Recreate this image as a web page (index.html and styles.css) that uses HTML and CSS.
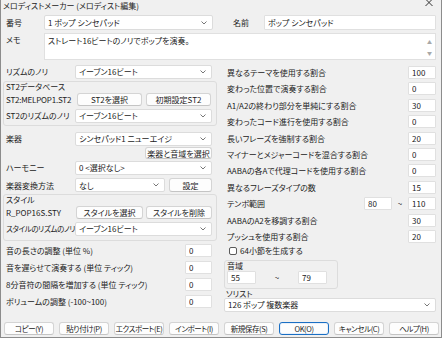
FILE: index.html
```html
<!DOCTYPE html>
<html lang="ja">
<head>
    <meta charset="UTF-8">
    <title>メロディストメーカー (メロディスト編集)</title>
    <link rel="stylesheet" href="styles.css">
</head>
<body>

<div class="dialog">
    <div class="titlebar">
        <span class="title">メロディストメーカー (メロディスト編集)</span>
        <svg class="close" width="10" height="8" viewBox="0 0 10 8"><path d="M1.5 0L8.5 7M8.5 0L1.5 7" stroke="#333" stroke-width="1" fill="none"/></svg>
    </div>

    <div class="head">
        <span class="head-lbl">番号</span>
        <div class="combo num"><span>1 ポップ シンセパッド</span><svg class="chev" width="6" height="4" viewBox="0 0 6 4"><path d="M0.5 0.5L3 3L5.5 0.5" stroke="#777" fill="none"/></svg></div>
        <span class="name-lbl">名前</span>
        <input class="field name" type="text" value="ポップ シンセパッド">
    </div>

    <div class="memo">
        <span class="head-lbl memo-lbl">メモ</span>
        <div class="memo-box">
            <span>ストレート16ビートのノリでポップを演奏。</span>
            <div class="scroll"><span>▲</span><span>▼</span></div>
        </div>
    </div>

    <div class="cols">
        <div class="left">
            <div class="lrow">
                <span class="lbl">リズムのノリ</span>
                <div class="combo wide"><span>イーブン16ビート</span><svg class="chev" width="6" height="4" viewBox="0 0 6 4"><path d="M0.5 0.5L3 3L5.5 0.5" stroke="#777" fill="none"/></svg></div>
            </div>

            <div class="group st2">
                <div class="group-title">ST2データベース</div>
                <div class="lrow btnrow">
                    <span class="lbl st2-lbl">ST2:MELPOP1.ST2</span>
                    <button class="btn st2-btn">ST2を選択</button>
                    <button class="btn st2-btn">初期設定ST2</button>
                </div>
                <div class="lrow">
                    <span class="lbl">ST2のリズムのノリ</span>
                    <div class="combo wide"><span>イーブン16ビート</span><svg class="chev" width="6" height="4" viewBox="0 0 6 4"><path d="M0.5 0.5L3 3L5.5 0.5" stroke="#777" fill="none"/></svg></div>
                </div>
            </div>

            <div class="lrow inst">
                <span class="lbl">楽器</span>
                <div class="combo wide"><span>シンセパッド1 ニューエイジ</span><svg class="chev" width="6" height="4" viewBox="0 0 6 4"><path d="M0.5 0.5L3 3L5.5 0.5" stroke="#777" fill="none"/></svg></div>
            </div>
            <div class="lrow small end">
                <button class="btn range-btn">楽器と音域を選択</button>
            </div>
            <div class="lrow">
                <span class="lbl">ハーモニー</span>
                <div class="combo wide"><span>0 &lt;選択なし&gt;</span><svg class="chev" width="6" height="4" viewBox="0 0 6 4"><path d="M0.5 0.5L3 3L5.5 0.5" stroke="#777" fill="none"/></svg></div>
            </div>
            <div class="lrow conv">
                <span class="lbl">楽器変換方法</span>
                <div class="combo short"><span>なし</span><svg class="chev" width="6" height="4" viewBox="0 0 6 4"><path d="M0.5 0.5L3 3L5.5 0.5" stroke="#777" fill="none"/></svg></div>
                <button class="btn set-btn">設定</button>
            </div>

            <div class="group style">
                <div class="group-title">スタイル</div>
                <div class="lrow btnrow">
                    <span class="lbl sty-lbl">R_POP16S.STY</span>
                    <button class="btn sty-btn">スタイルを選択</button>
                    <button class="btn sty-btn">スタイルを削除</button>
                </div>
                <div class="lrow">
                    <span class="lbl tight">スタイルのリズムのノリ</span>
                    <div class="combo wide"><span>イーブン16ビート</span><svg class="chev" width="6" height="4" viewBox="0 0 6 4"><path d="M0.5 0.5L3 3L5.5 0.5" stroke="#777" fill="none"/></svg></div>
                </div>
            </div>

            <div class="adjust">
                <div class="lrow"><span class="alb">音の長さの調整 (単位 %)</span><input class="field num-in" type="text" value="0"></div>
                <div class="lrow"><span class="alb">音を遅らせて演奏する (単位 ティック)</span><input class="field num-in" type="text" value="0"></div>
                <div class="lrow"><span class="alb">8分音符の間隔を増加する (単位 ティック)</span><input class="field num-in" type="text" value="0"></div>
                <div class="lrow"><span class="alb">ボリュームの調整 (-100~100)</span><input class="field num-in" type="text" value="0"></div>
            </div>
        </div>

        <div class="right">
            <div class="rrow first"><span class="rlb">異なるテーマを使用する割合</span><input class="field val" type="text" value="100"></div>
            <div class="rrow"><span class="rlb">変わった位置で演奏する割合</span><input class="field val" type="text" value="0"></div>
            <div class="rrow"><span class="rlb">A1/A2の終わり部分を単純にする割合</span><input class="field val" type="text" value="30"></div>
            <div class="rrow"><span class="rlb">変わったコード進行を使用する割合</span><input class="field val" type="text" value="0"></div>
            <div class="rrow"><span class="rlb">長いフレーズを強制する割合</span><input class="field val" type="text" value="20"></div>
            <div class="rrow"><span class="rlb">マイナーとメジャーコードを混合する割合</span><input class="field val" type="text" value="0"></div>
            <div class="rrow"><span class="rlb">AABAの各Aで代理コードを使用する割合</span><input class="field val" type="text" value="0"></div>
            <div class="rrow"><span class="rlb">異なるフレーズタイプの数</span><input class="field val" type="text" value="15"></div>
            <div class="rrow"><span class="rlb">テンポ範囲</span><input class="field val" type="text" value="80"><span class="tilde">~</span><input class="field val" type="text" value="110"></div>
            <div class="rrow"><span class="rlb">AABAのA2を移調する割合</span><input class="field val" type="text" value="30"></div>
            <div class="rrow"><span class="rlb">プッシュを使用する割合</span><input class="field val" type="text" value="20"></div>
            <div class="check-row"><span class="checkbox"></span><span>64小節を生成する</span></div>

            <div class="range">
                <div class="range-title">音域</div>
                <div class="range-row">
                    <input class="field rng" type="text" value="55">
                    <span class="rng-tilde">~</span>
                    <input class="field rng" type="text" value="79">
                </div>
            </div>
            <div class="solo-title">ソリスト</div>
            <div class="combo solo"><span>126 ポップ 複数楽器</span><svg class="chev" width="6" height="4" viewBox="0 0 6 4"><path d="M0.5 0.5L3 3L5.5 0.5" stroke="#777" fill="none"/></svg></div>
        </div>
    </div>

    <div class="footer">
        <button class="btn foot-btn">コピー(Y)</button>
        <button class="btn foot-btn">貼り付け(P)</button>
        <button class="btn foot-btn">エクスポート(E)</button>
        <button class="btn foot-btn">インポート(I)</button>
        <button class="btn foot-btn">新規保存(S)</button>
        <button class="btn foot-btn ok">OK(O)</button>
        <button class="btn foot-btn">キャンセル(C)</button>
        <button class="btn foot-btn">ヘルプ(H)</button>
    </div>
</div>

</body>
</html>
```

FILE: styles.css
```css
body {
    margin: 0;
    font-family: "Noto Sans CJK JP", "Noto Sans", sans-serif;
    font-size: 8px;
    font-feature-settings: "palt";
    color: #222;
    background: #f0f0f0;
}
.dialog {
    width: 442px;
    height: 338px;
    box-sizing: border-box;
    background: #f0f0f0;
    border: 1px solid #8c8c8c;
    border-top: none;
    display: flex;
    flex-direction: column;
}
.titlebar {
    height: 15px;
    display: flex;
    justify-content: space-between;
    align-items: flex-start;
    padding: 0 7px 0 2px;
}
.title {
    line-height: 12px;
}
.close {
    margin-top: -1px;
}

/* shared controls */
.combo {
    box-sizing: border-box;
    height: 14px;
    flex-shrink: 0;
    background: #fff;
    border: 1px solid #dcdcdc;
    border-radius: 2px;
    display: flex;
    align-items: center;
    justify-content: space-between;
    padding: 0 5px 0 3px;
    white-space: nowrap;
}
.field {
    box-sizing: border-box;
    height: 13px;
    flex-shrink: 0;
    margin: 0;
    padding: 0 3px;
    background: #fff;
    border: 1px solid #e0e0e0;
    border-radius: 1px;
    font: inherit;
    font-feature-settings: "palt";
    color: #222;
    outline: none;
}
.btn {
    box-sizing: border-box;
    height: 13px;
    flex-shrink: 0;
    margin: 0;
    padding: 0;
    background: #fdfdfd;
    border: 1px solid #d4d4d4;
    border-bottom-color: #c4c4c4;
    border-radius: 3px;
    font: inherit;
    font-feature-settings: "palt";
    color: #222;
    white-space: nowrap;
    overflow: hidden;
}

/* header */
.head {
    height: 15px;
    display: flex;
    align-items: center;
}
.head-lbl {
    width: 43px;
    box-sizing: border-box;
    padding-left: 5px;
    flex-shrink: 0;
}
.combo.num {
    width: 169px;
    height: 15px;
}
.name-lbl {
    width: 31px;
    margin-left: 20px;
}
.field.name {
    width: 172px;
    height: 15px;
}
.memo {
    margin-top: 3px;
    height: 27px;
    display: flex;
}
.memo-lbl {
    padding-top: 1px;
}
.memo-box {
    width: 392px;
    box-sizing: border-box;
    background: #fff;
    border: 1px solid #e0e0e0;
    padding: 1px 3px;
    display: flex;
    justify-content: space-between;
}
.scroll {
    display: flex;
    flex-direction: column;
    justify-content: space-between;
    padding: 3px 0 2px;
    font-size: 5px;
    color: #a8a8a8;
}

/* columns */
.cols {
    margin-top: 3px;
    height: 257px;
    display: flex;
}
.left {
    width: 214px;
    margin-left: 2px;
}
.right {
    width: 213px;
    margin-left: 7px;
}
.lrow {
    height: 17px;
    display: flex;
    align-items: center;
}
.lbl {
    width: 72px;
    flex-shrink: 0;
    box-sizing: border-box;
    padding-left: 3px;
    white-space: nowrap;
}
.lbl.tight {
    font-size: 7.5px;
    letter-spacing: -0.4px;
}
.combo.wide {
    width: 137px;
}
.group {
    border: 1px solid #dcdcdc;
    border-radius: 3px;
}
.group .lbl {
    width: 71px;
    padding-left: 2px;
}
.group-title {
    height: 10px;
    line-height: 10px;
    padding-left: 2px;
}
.st2 {
    margin-top: 1px;
    padding-bottom: 1px;
}
.lrow.btnrow {
    height: 15px;
}
.group .st2-lbl {
    width: 73px;
    letter-spacing: -0.2px;
}
.st2-btn {
    width: 65px;
    margin-right: 4px;
}
.lrow.inst {
    margin-top: 4px;
}
.lrow.small {
    height: 12px;
}
.lrow.end {
    justify-content: flex-end;
    padding-right: 5px;
}
.range-btn {
    width: 67px;
    height: 12px;
}
.lrow.conv {
    height: 18px;
}
.combo.short {
    width: 90px;
}
.set-btn {
    width: 43px;
    height: 14px;
    margin-left: 4px;
}
.style {
    padding-bottom: 3px;
}
.group .sty-lbl {
    width: 72px;
}
.sty-btn {
    width: 67px;
    margin-right: 3px;
}
.sty-btn + .sty-btn {
    width: 66px;
}
.adjust {
    margin-top: 1px;
}
.alb {
    flex: 1;
    padding-left: 3px;
    white-space: nowrap;
}
.num-in {
    width: 27px;
    margin-right: 5px;
}

/* right column */
.rrow {
    height: 16.4px;
    display: flex;
    align-items: center;
    padding: 0 1px 0 3px;
}
.rrow.first {
    margin-top: 1.3px;
}
.rlb {
    flex: 1;
    white-space: nowrap;
}
.val {
    width: 28px;
}
.tilde {
    width: 16px;
    text-align: center;
}
.check-row {
    height: 12px;
    display: flex;
    align-items: center;
    padding-left: 5px;
}
.checkbox {
    width: 8px;
    height: 8px;
    box-sizing: border-box;
    border: 1px solid #5a5a5a;
    border-radius: 2px;
    background: #fff;
    margin-right: 3px;
}
.range {
    margin-top: 3px;
    width: 114px;
    box-sizing: border-box;
    border: 1px solid #dcdcdc;
    border-radius: 3px;
    padding: 0 2px 3px;
}
.range-title {
    height: 9px;
    line-height: 9px;
}
.range-row {
    height: 15px;
    display: flex;
    align-items: center;
}
.rng {
    width: 29px;
}
.rng-tilde {
    width: 42px;
    text-align: center;
}
.solo-title {
    height: 9px;
    line-height: 9px;
    padding-left: 2px;
}
.combo.solo {
    width: 212px;
}

/* footer */
.footer {
    margin-top: 2px;
    display: flex;
    gap: 5px;
    padding-left: 3px;
}
.foot-btn {
    width: 50px;
    font-size: 7.5px;
    letter-spacing: -0.4px;
}
.btn.ok {
    border: 1px solid #1a6fc4;
    box-shadow: inset 0 0 0 1px #e8f0fa;
}
```
